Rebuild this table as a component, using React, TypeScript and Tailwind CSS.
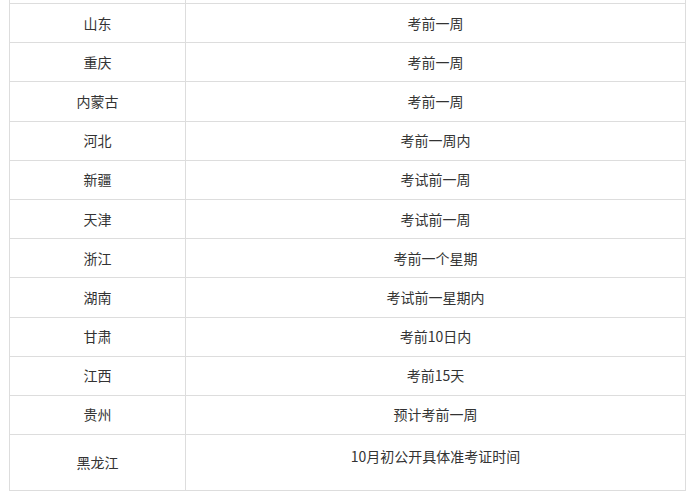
import React from 'react';

const rows: [string, string][] = [
  ['山东', '考前一周'],
  ['重庆', '考前一周'],
  ['内蒙古', '考前一周'],
  ['河北', '考前一周内'],
  ['新疆', '考试前一周'],
  ['天津', '考试前一周'],
  ['浙江', '考前一个星期'],
  ['湖南', '考试前一星期内'],
  ['甘肃', '考前10日内'],
  ['江西', '考前15天'],
  ['贵州', '预计考前一周'],
];

const App = () => {
  return (
    <div
      className="w-[700px] h-[499px] bg-white overflow-hidden text-[14px] text-[#333]"
      style={{ fontFamily: '"Microsoft YaHei", "Noto Sans CJK SC", "Noto Sans", sans-serif' }}
    >
      <div className="ml-[9px] w-[677px] border-x border-[#dddddd]">
        {/* cropped row above */}
        <div className="flex h-[4px] border-b border-[#dddddd]">
          <div className="w-[176px] border-r border-[#dddddd]" />
          <div className="flex-1" />
        </div>

        {rows.map(([province, time]) => (
          <div key={province} className="flex h-[39.2px] border-b border-[#dddddd]">
            <div className="w-[176px] border-r border-[#dddddd] flex items-center justify-center">
              {province}
            </div>
            <div className="flex-1 flex items-center justify-center">{time}</div>
          </div>
        ))}

        <div className="flex h-[56px] border-b border-[#dddddd]">
          <div className="w-[176px] border-r border-[#dddddd] flex items-center justify-center">
            黑龙江
          </div>
          <div className="flex-1 pt-[10px] text-center leading-[22px]">10月初公开具体准考证时间</div>
        </div>
      </div>
    </div>
  );
};

export default App;
